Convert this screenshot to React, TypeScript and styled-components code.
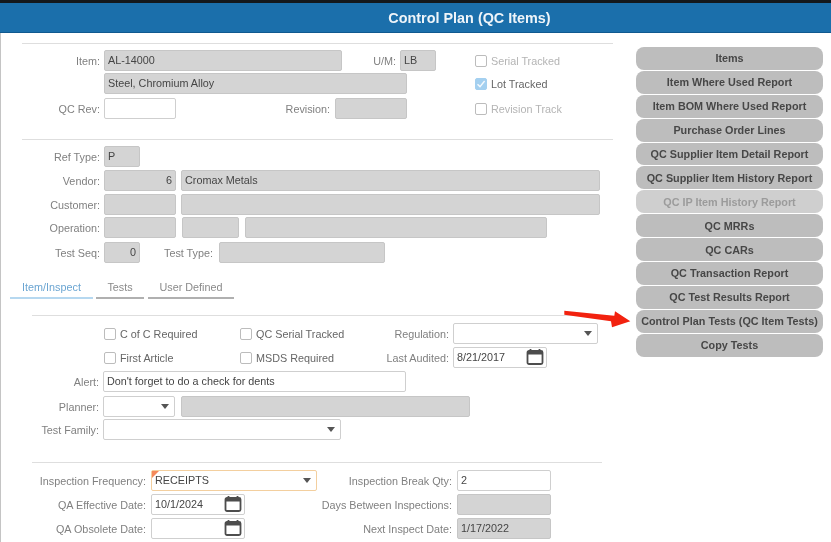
import React from "react";
import styled, { createGlobalStyle } from "styled-components";

const GlobalStyle = createGlobalStyle`
  html, body { margin: 0; padding: 0; background: #fff; }
  body { font-family: "Liberation Sans", Arial, sans-serif; }
`;

const Page = styled.div`
  width: 831px;
  height: 542px;
  overflow: hidden;
  position: relative;
  background: #fff;
  filter: blur(0.45px);
  box-sizing: border-box;
  border-top: 3px solid #14181c;
`;

const Header = styled.div`
  height: 30px;
  background: #1b6fab;
  border-bottom: 1px solid #10598f;
  box-sizing: border-box;
  display: flex;
  align-items: center;
  justify-content: center;
  color: #eef4f9;
  font-size: 14.4px;
  font-weight: bold;
  padding-left: 108px;
`;

const Body = styled.div`
  display: flex;
  height: 509px;
  border-left: 1px solid #c4c4c4;
  border-bottom: 1px solid #e2e2e2;
`;

const Form = styled.div`
  width: 635px;
  flex: none;
`;

const Divider = styled.div<{ $top: number; $left: number; $w: number }>`
  height: 1px;
  background: #dedede;
  margin-top: ${(p) => p.$top}px;
  margin-left: ${(p) => p.$left}px;
  width: ${(p) => p.$w}px;
`;

const Row = styled.div<{ $top: number }>`
  display: flex;
  align-items: center;
  height: 21px;
  margin-top: ${(p) => p.$top}px;
`;

const Label = styled.div<{ $w: number }>`
  width: ${(p) => p.$w}px;
  flex: none;
  margin-right: 4px;
  text-align: right;
  white-space: nowrap;
  font-size: 10.8px;
  color: #808080;
`;

const Field = styled.div<{ $w: number; $ml?: number; $edit?: boolean; $right?: boolean }>`
  width: ${(p) => p.$w}px;
  height: 21px;
  flex: none;
  box-sizing: border-box;
  margin-left: ${(p) => p.$ml ?? 0}px;
  padding: 0 3px 1px;
  display: flex;
  align-items: center;
  justify-content: ${(p) => (p.$right ? "flex-end" : "space-between")};
  background: ${(p) => (p.$edit ? "#fff" : "#d4d4d4")};
  border: 1px solid ${(p) => (p.$edit ? "#cfcfcf" : "#c6c6c6")};
  border-radius: 2px;
  font-size: 10.8px;
  color: #454545;
  white-space: nowrap;
`;

const FlagField = styled(Field)`
  position: relative;
  border-color: #f3cf9f;

  &::before {
    content: "";
    position: absolute;
    left: 0;
    top: 0;
    border-top: 7px solid #f58a5c;
    border-right: 7px solid transparent;
  }
`;

const Caret = styled.span`
  width: 0;
  height: 0;
  margin-right: 2px;
  border-left: 4px solid transparent;
  border-right: 4px solid transparent;
  border-top: 5px solid #555;
`;

const Box = styled.span<{ $on?: boolean }>`
  width: 12px;
  height: 12px;
  flex: none;
  box-sizing: border-box;
  border: 1px solid ${(p) => (p.$on ? "#a4d0f0" : "#bcbcbc")};
  border-radius: 2px;
  background: ${(p) => (p.$on ? "#a4d0f0" : "#fff")};
  display: flex;
  align-items: center;
  justify-content: center;
`;

const CheckItem = styled.div<{ $w?: number; $ml?: number; $muted?: boolean }>`
  display: flex;
  align-items: center;
  gap: 4px;
  flex: none;
  width: ${(p) => (p.$w ? `${p.$w}px` : "auto")};
  margin-left: ${(p) => p.$ml ?? 0}px;
  font-size: 10.8px;
  color: ${(p) => (p.$muted ? "#b4b4b4" : "#666")};
  white-space: nowrap;
`;

const Tabs = styled.div`
  display: flex;
  margin-top: 7px;
  margin-left: 9px;
`;

const Tab = styled.div<{ $w: number; $ml?: number; $active?: boolean }>`
  width: ${(p) => p.$w}px;
  height: 29px;
  margin-left: ${(p) => p.$ml ?? 0}px;
  padding-top: 7px;
  box-sizing: border-box;
  display: flex;
  align-items: center;
  justify-content: center;
  font-size: 10.8px;
  color: ${(p) => (p.$active ? "#6ba5d2" : "#8a8a8a")};
  border-bottom: 2px solid ${(p) => (p.$active ? "#b6d8f0" : "#b0b0b0")};
`;

const Side = styled.div`
  width: 187px;
  margin-top: 14px;
  display: flex;
  flex-direction: column;
  gap: 1px;
`;

const SideButton = styled.div<{ $disabled?: boolean }>`
  height: 22.9px;
  flex: none;
  display: flex;
  align-items: center;
  justify-content: center;
  border-radius: 8px;
  background: ${(p) => (p.$disabled ? "#cfcfcf" : "#bdbdbd")};
  color: ${(p) => (p.$disabled ? "#9b9b9b" : "#474747")};
  font-size: 10.8px;
  font-weight: bold;
  white-space: nowrap;
`;

const Arrow = styled.svg`
  position: absolute;
  left: 560px;
  top: 300px;
`;

const CalendarIcon = () => (
  <svg width="18" height="18" viewBox="0 0 18 18" fill="none" style={{ marginRight: -1 }}>
    <path d="M4.5 1v3M13.5 1v3" stroke="#4d4d4d" strokeWidth="1.8" />
    <rect x="1.5" y="3" width="15" height="13" rx="1.5" stroke="#4d4d4d" strokeWidth="1.8" />
    <rect x="1.5" y="3" width="15" height="3.5" fill="#4d4d4d" />
  </svg>
);

const Tick = () => (
  <svg width="10" height="10" viewBox="0 0 10 10" fill="none">
    <path d="M1.5 5.2 4 7.6 8.6 2" stroke="#f4f9fd" strokeWidth="1.4" />
  </svg>
);

const buttons = [
  "Items",
  "Item Where Used Report",
  "Item BOM Where Used Report",
  "Purchase Order Lines",
  "QC Supplier Item Detail Report",
  "QC Supplier Item History Report",
  "QC IP Item History Report",
  "QC MRRs",
  "QC CARs",
  "QC Transaction Report",
  "QC Test Results Report",
  "Control Plan Tests (QC Item Tests)",
  "Copy Tests",
];

export default function App() {
  return (
    <>
      <GlobalStyle />
      <Page>
        <Header>Control Plan (QC Items)</Header>
        <Body>
          <Form>
            <Divider $top={10} $left={21} $w={591} />
            <Row $top={6}>
              <Label $w={99}>Item:</Label>
              <Field $w={238}>AL-14000</Field>
              <Label $w={54}>U/M:</Label>
              <Field $w={36}>LB</Field>
              <CheckItem $ml={39} $muted>
                <Box />
                Serial Tracked
              </CheckItem>
            </Row>
            <Row $top={2}>
              <Label $w={99} />
              <Field $w={303}>Steel, Chromium Alloy</Field>
              <CheckItem $ml={68}>
                <Box $on>
                  <Tick />
                </Box>
                Lot Tracked
              </CheckItem>
            </Row>
            <Row $top={4}>
              <Label $w={99}>QC Rev:</Label>
              <Field $w={72} $edit />
              <Label $w={154}>Revision:</Label>
              <Field $w={72} $ml={1} />
              <CheckItem $ml={68} $muted>
                <Box />
                Revision Track
              </CheckItem>
            </Row>
            <Divider $top={20} $left={21} $w={591} />
            <Row $top={6}>
              <Label $w={99}>Ref Type:</Label>
              <Field $w={36}>P</Field>
            </Row>
            <Row $top={3}>
              <Label $w={99}>Vendor:</Label>
              <Field $w={72} $right>
                6
              </Field>
              <Field $w={419} $ml={5}>
                Cromax Metals
              </Field>
            </Row>
            <Row $top={3}>
              <Label $w={99}>Customer:</Label>
              <Field $w={72} />
              <Field $w={419} $ml={5} />
            </Row>
            <Row $top={2}>
              <Label $w={99}>Operation:</Label>
              <Field $w={72} />
              <Field $w={57} $ml={6} />
              <Field $w={302} $ml={6} />
            </Row>
            <Row $top={4}>
              <Label $w={99}>Test Seq:</Label>
              <Field $w={36} $right>
                0
              </Field>
              <Label $w={73}>Test Type:</Label>
              <Field $w={166} $ml={2} />
            </Row>
            <Tabs>
              <Tab $w={83} $active>
                Item/Inspect
              </Tab>
              <Tab $w={48} $ml={3}>
                Tests
              </Tab>
              <Tab $w={86} $ml={4}>
                User Defined
              </Tab>
            </Tabs>
            <Divider $top={16} $left={31} $w={570} />
            <Row $top={7}>
              <CheckItem $w={136} $ml={103}>
                <Box />C of C Required
              </CheckItem>
              <CheckItem $w={144}>
                <Box />
                QC Serial Tracked
              </CheckItem>
              <Label $w={65}>Regulation:</Label>
              <Field $w={145} $edit>
                <span />
                <Caret />
              </Field>
            </Row>
            <Row $top={3}>
              <CheckItem $w={136} $ml={103}>
                <Box />
                First Article
              </CheckItem>
              <CheckItem $w={144}>
                <Box />
                MSDS Required
              </CheckItem>
              <Label $w={65}>Last Audited:</Label>
              <Field $w={94} $edit>
                8/21/2017
                <CalendarIcon />
              </Field>
            </Row>
            <Row $top={3}>
              <Label $w={98}>Alert:</Label>
              <Field $w={303} $edit>
                Don't forget to do a check for dents
              </Field>
            </Row>
            <Row $top={4}>
              <Label $w={98}>Planner:</Label>
              <Field $w={72} $edit>
                <span />
                <Caret />
              </Field>
              <Field $w={289} $ml={6} />
            </Row>
            <Row $top={2}>
              <Label $w={98}>Test Family:</Label>
              <Field $w={238} $edit>
                <span />
                <Caret />
              </Field>
            </Row>
            <Divider $top={22} $left={31} $w={570} />
            <Row $top={7}>
              <Label $w={145}>Inspection Frequency:</Label>
              <FlagField $w={166} $ml={1} $edit>
                RECEIPTS
                <Caret />
              </FlagField>
              <Label $w={135}>Inspection Break Qty:</Label>
              <Field $w={94} $ml={1} $edit>
                2
              </Field>
            </Row>
            <Row $top={3}>
              <Label $w={145}>QA Effective Date:</Label>
              <Field $w={94} $ml={1} $edit>
                10/1/2024
                <CalendarIcon />
              </Field>
              <Label $w={207}>Days Between Inspections:</Label>
              <Field $w={94} $ml={1} />
            </Row>
            <Row $top={3}>
              <Label $w={145}>QA Obsolete Date:</Label>
              <Field $w={94} $ml={1} $edit>
                <span />
                <CalendarIcon />
              </Field>
              <Label $w={207}>Next Inspect Date:</Label>
              <Field $w={94} $ml={1}>
                1/17/2022
              </Field>
            </Row>
          </Form>
          <Side>
            {buttons.map((b) => (
              <SideButton key={b} $disabled={b === "QC IP Item History Report"}>
                {b}
              </SideButton>
            ))}
          </Side>
        </Body>
        <Arrow width="76" height="30" viewBox="0 0 76 30">
          <path d="M4.3 7.7 L54.3 12.7 L55 8.3 L70.3 18.3 L52 24.3 L51 18.3 L4.3 11.7 Z" fill="#f2220f" />
        </Arrow>
      </Page>
    </>
  );
}
